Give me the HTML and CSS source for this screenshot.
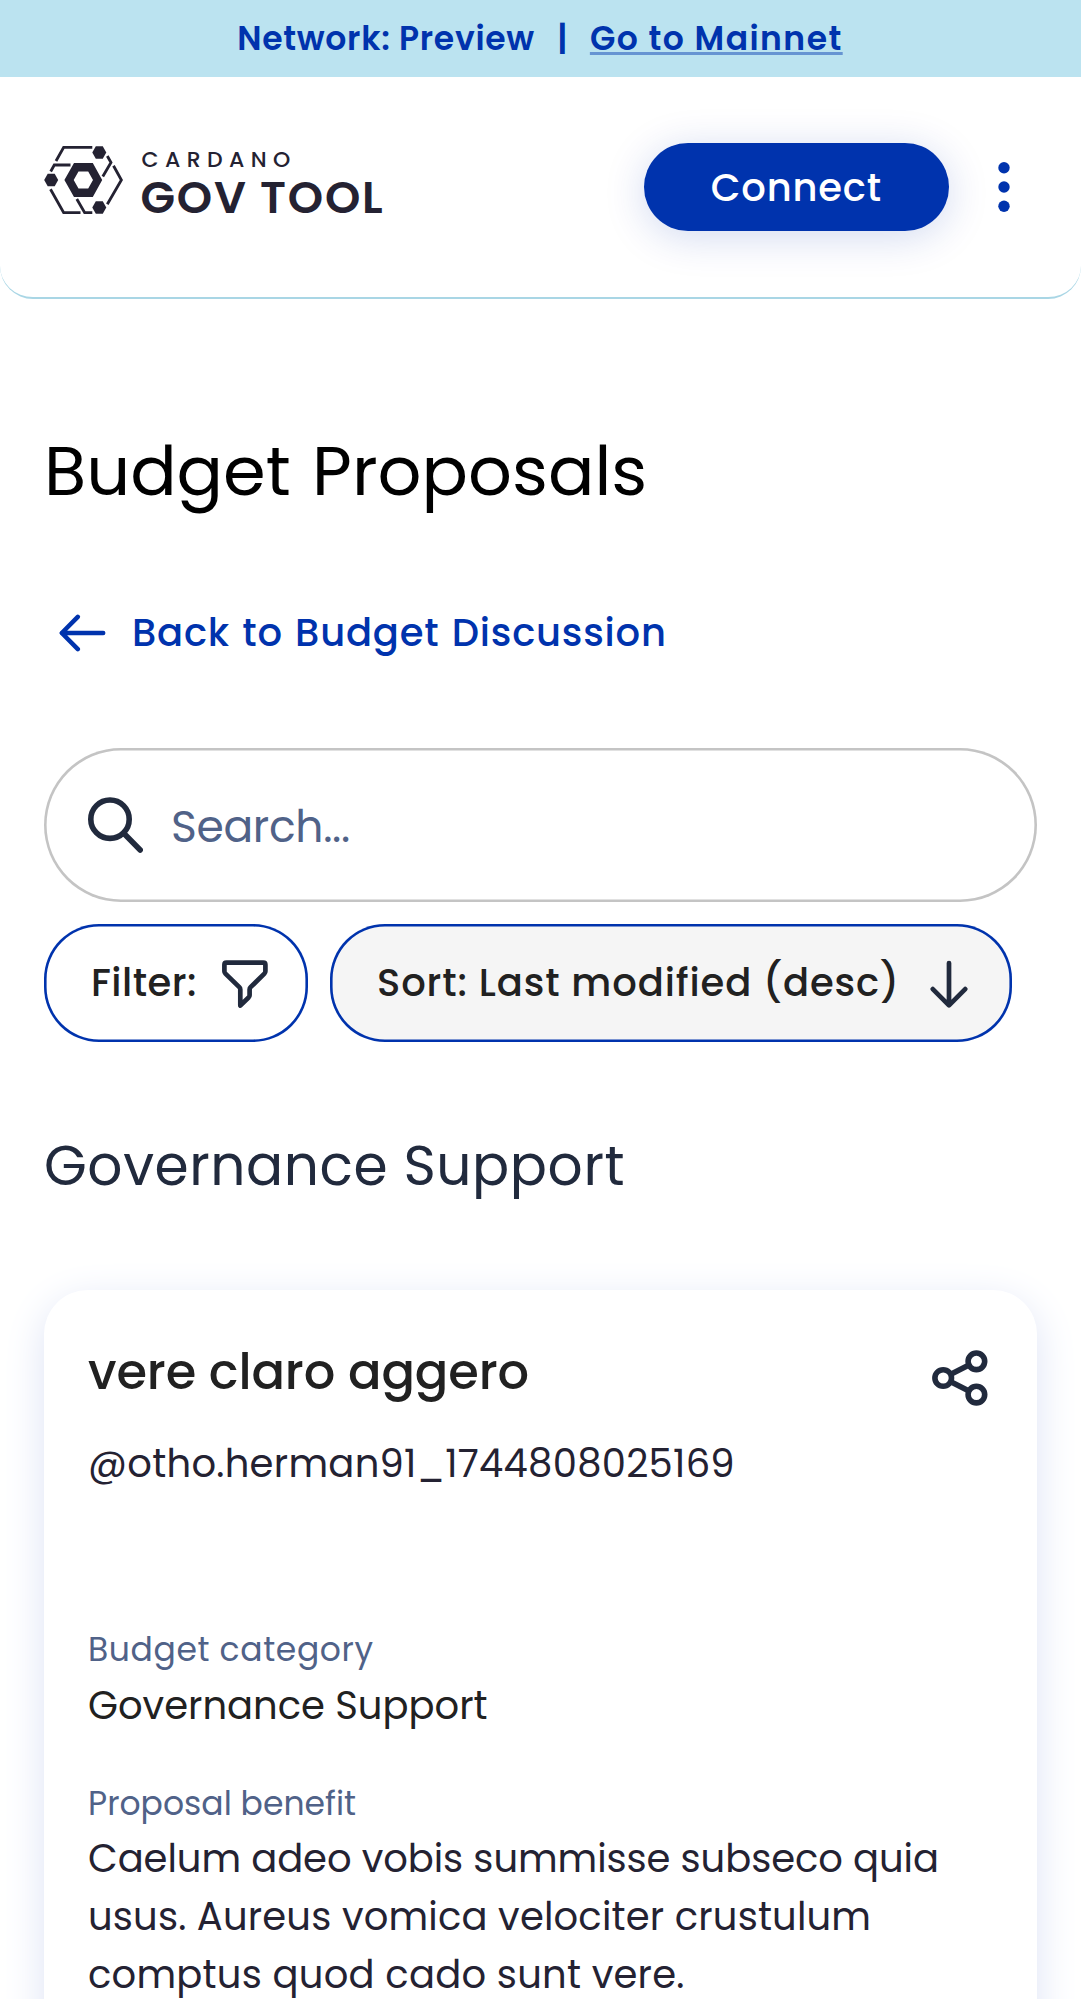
FILE: index.html
```html
<!DOCTYPE html>
<html lang="en">
<head>
<meta charset="utf-8">
<title>Budget Proposals</title>
<link rel="stylesheet" href="styles.css">
</head>
<body>
<div class="page">
  <div class="banner">
    <span class="banner-network">Network: Preview</span>
    <span class="banner-divider">|</span>
    <a class="banner-link">Go to Mainnet</a>
  </div>
  <header class="header">
    <div class="logo">
      <svg class="logo-mark" viewBox="0 0 79 68" width="79" height="68">
        <g fill="none" stroke="#242232" stroke-width="2.8">
          <path d="M12 15L19.7 1.3H48.3"/>
          <path d="M63.3 10L67 16.5L58.8 30.5"/>
          <path d="M69.5 19.7L77.4 34L63.3 58.3"/>
          <path d="M6.7 25.5L10.3 19H26.5"/>
          <path d="M6.5 43.2L19.7 66.7H36.5"/>
          <path d="M32.8 53L40.7 66.7H48.3"/>
        </g>
        <g fill="#242232">
          <path d="M48.3 6.4L51.8 0.2H58.8L62.3 6.4L58.8 12.7H51.8Z"/>
          <path d="M0.2 34L3.7 27.7H10.7L14.2 34L10.7 40.3H3.7Z"/>
          <path d="M48.3 61.6L51.8 55.3H58.8L62.3 61.6L58.8 67.8H51.8Z"/>
          <path fill-rule="evenodd" d="M20.4 34L30 17H48.8L58.2 34L48.8 51H30ZM29.7 34L34.5 42.6H44.2L49 34L44.2 25.4H34.5Z"/>
        </g>
      </svg>
      <div class="logo-text">
        <span class="logo-top">CARDANO</span>
        <span class="logo-name">GOV TOOL</span>
      </div>
    </div>
    <div class="header-actions">
      <button class="connect">Connect</button>
      <svg class="menu" viewBox="0 0 22 52" width="22" height="52" fill="#0033ad">
        <circle cx="11" cy="6.8" r="5.7"/><circle cx="11" cy="26" r="5.7"/><circle cx="11" cy="45.3" r="5.7"/>
      </svg>
    </div>
  </header>
  <main class="main">
    <h1 class="title">Budget Proposals</h1>
    <a class="back">
      <svg viewBox="0 0 47 38" width="47" height="38" fill="none" stroke="#0033ad" stroke-width="4.5" stroke-linecap="round" stroke-linejoin="round">
        <path d="M44.2 19H2.8M18.8 2.8L2.8 19L18.8 35.2"/>
      </svg>
      <span>Back to Budget Discussion</span>
    </a>
    <div class="search">
      <svg viewBox="0 0 55 56" width="55" height="56" fill="none" stroke="#212a3d" stroke-width="5.6" stroke-linecap="round">
        <circle cx="22" cy="22.2" r="19.2"/><path d="M36 36.5L52.2 53"/>
      </svg>
      <span>Search...</span>
    </div>
    <div class="controls">
      <button class="chip">
        <span class="filter-label">Filter:</span>
        <svg viewBox="0 0 46 48" width="46" height="48" fill="none" stroke="#212a3d" stroke-width="4.7" stroke-linejoin="round">
          <path d="M4.5 2.7H41.3Q43.4 2.7 43.4 4.8V11.2Q43.4 12.6 42.4 13.6L28.6 27.2Q27.6 28.2 27.6 29.6V35.2Q27.6 36.6 26.6 37.5L18.3 45.5V29.6Q18.3 28.2 17.3 27.2L3.4 13.6Q2.4 12.6 2.4 11.2V4.8Q2.4 2.7 4.5 2.7Z"/>
        </svg>
      </button>
      <button class="chip chip-active">
        <span class="sort-label">Sort: Last modified (desc)</span>
        <svg viewBox="0 0 38 48" width="38" height="48" fill="none" stroke="#212a3d" stroke-width="4.7" stroke-linecap="round" stroke-linejoin="round">
          <path d="M19 3V45.3M2.8 29.1L19 45.3L35.2 29.1"/>
        </svg>
      </button>
    </div>
    <h2 class="section-title">Governance Support</h2>
    <article class="card">
      <div class="card-head">
        <h3 class="card-title">vere claro aggero</h3>
        <svg class="share" viewBox="0 0 56 56" width="56" height="56" fill="none" stroke="#212a3d" stroke-width="5.6">
          <circle cx="11.2" cy="28" r="8.3"/><circle cx="44.4" cy="11.3" r="8.3"/><circle cx="44.4" cy="44.6" r="8.3"/>
          <path d="M18.8 24.2L37 15M18.8 31.8L37 41"/>
        </svg>
      </div>
      <div class="author">@otho.herman91_1744808025169</div>
      <div class="label label-category">Budget category</div>
      <div class="value">Governance Support</div>
      <div class="label label-benefit">Proposal benefit</div>
      <p class="benefit">
        <span class="line-1">Caelum adeo vobis summisse subseco quia</span>
        <span class="line-2">usus. Aureus vomica velociter crustulum</span>
        <span class="line-3">comptus quod cado sunt vere.</span>
      </p>
    </article>
  </main>
</div>
</body>
</html>
```
FILE: styles.css
```css
* { box-sizing: border-box; }
body { margin: 0; background: #fff; }
h1, h2, h3, p { margin: 0; font-weight: 400; }
button { font: inherit; border: 0; padding: 0; margin: 0; background: none; }
svg { display: block; flex: none; }
.page {
  height: 1999px;
  overflow: hidden;
  font-family: Poppins, Inter, sans-serif;
  color: #242232;
  white-space: nowrap;
}

.banner {
  display: flex;
  justify-content: center;
  align-items: center;
  height: 77px;
  padding-right: 1px;
  background: #bbe3f0;
  color: #0033ad;
  font-size: 33px;
  font-weight: 600;
}
.banner-network { letter-spacing: 0.7px; }
.banner-divider { width: 55px; text-align: center; }
.banner-link {
  letter-spacing: 1.45px;
  text-decoration: underline;
  text-decoration-color: rgba(0, 51, 173, 0.45);
  text-decoration-thickness: 3px;
  text-decoration-skip-ink: none;
  text-underline-offset: 2px;
}

.header {
  display: flex;
  justify-content: space-between;
  align-items: center;
  height: 222px;
  margin-bottom: 1px;
  padding: 0 65.6px 0 44px;
  border-bottom: 2px solid #a9d6e5;
  border-radius: 0 0 33px 33px;
}
.logo { display: flex; gap: 18.5px; height: 68px; margin-bottom: 14px; }
.logo-text { display: flex; flex-direction: column; }
.logo-top { font-size: 22px; line-height: 28px; font-weight: 500; letter-spacing: 6.41px; }
.logo-name { font-size: 45px; line-height: 48px; font-weight: 600; letter-spacing: 1.75px; margin-left: -1px; }
.header-actions { display: flex; align-items: center; gap: 44.4px; }
.connect {
  width: 305.5px;
  height: 88px;
  border-radius: 44px;
  background: #0033ad;
  color: #fff;
  font-size: 38.5px;
  font-weight: 500;
  letter-spacing: 0.81px;
  box-shadow: 0 6px 41px rgba(0, 51, 173, 0.18);
}

.main { padding: 131px 44px 0; }
.title { color: #000; font-size: 68.75px; line-height: 80px; letter-spacing: 0; word-spacing: 3px; }
.back {
  display: flex;
  align-items: center;
  gap: 26.5px;
  margin-top: 98px;
  padding-left: 14.5px;
  color: #0033ad;
  font-size: 38.5px;
  line-height: 48px;
  font-weight: 500;
  letter-spacing: 0.8px;
  word-spacing: 1.5px;
}
.search {
  display: flex;
  align-items: center;
  gap: 28px;
  height: 154px;
  margin-top: 91px;
  padding-left: 44px;
  box-shadow: inset 0 0 0 2.6px #c4c4c4;
  border-radius: 77px;
  color: #506288;
  font-size: 44px;
  letter-spacing: -0.33px;
}
.search span { padding-top: 3px; }
.controls { display: flex; gap: 22px; margin-top: 22px; }
.chip {
  display: flex;
  align-items: center;
  justify-content: space-between;
  width: 264px;
  height: 118px;
  padding: 0 40px 0 47px;
  box-shadow: inset 0 0 0 2.6px #0033ad;
  border-radius: 55px;
  color: #212121;
  font-size: 38.5px;
  font-weight: 500;
}
.chip span { padding-bottom: 2px; }
.chip svg { margin-top: 2px; }
.filter-label { letter-spacing: 0.49px; }
.sort-label { letter-spacing: 0.9px; }
.chip-active { width: 681.7px; padding: 0 44px 0 47px; background: #f5f5f5; }
.section-title {
  margin-top: 91.6px;
  color: #212a3d;
  font-size: 55px;
  line-height: 64px;
  letter-spacing: 0.57px;
}

.card {
  height: 900px;
  margin-top: 92px;
  padding: 52px 44px 0;
  border-radius: 44px;
  background: #fff;
  box-shadow: 0 11px 41px #dde3f5;
}
.card-head { display: flex; justify-content: space-between; }
.card-title { color: #212121; font-size: 49.5px; line-height: 60px; font-weight: 500; letter-spacing: -0.12px; }
.share { margin: 8px 5.5px -4px 0; }
.author { margin-top: 34.5px; font-size: 38.5px; line-height: 56px; letter-spacing: 0.28px; }
.label { color: #506288; font-size: 33px; line-height: 44px; }
.label-category { margin-top: 136px; letter-spacing: 0.62px; }
.label-benefit { margin-top: 47px; letter-spacing: 0.02px; }
.value {
  margin-top: 5px;
  color: #212121;
  font-size: 38.5px;
  line-height: 57.75px;
}
.benefit { margin-top: 4.6px; font-size: 38.5px; line-height: 57.75px; }
.benefit span { display: block; }
.line-1 { letter-spacing: -0.07px; }
.line-2 { letter-spacing: 0.17px; }
.line-3 { letter-spacing: 0.23px; }
```
